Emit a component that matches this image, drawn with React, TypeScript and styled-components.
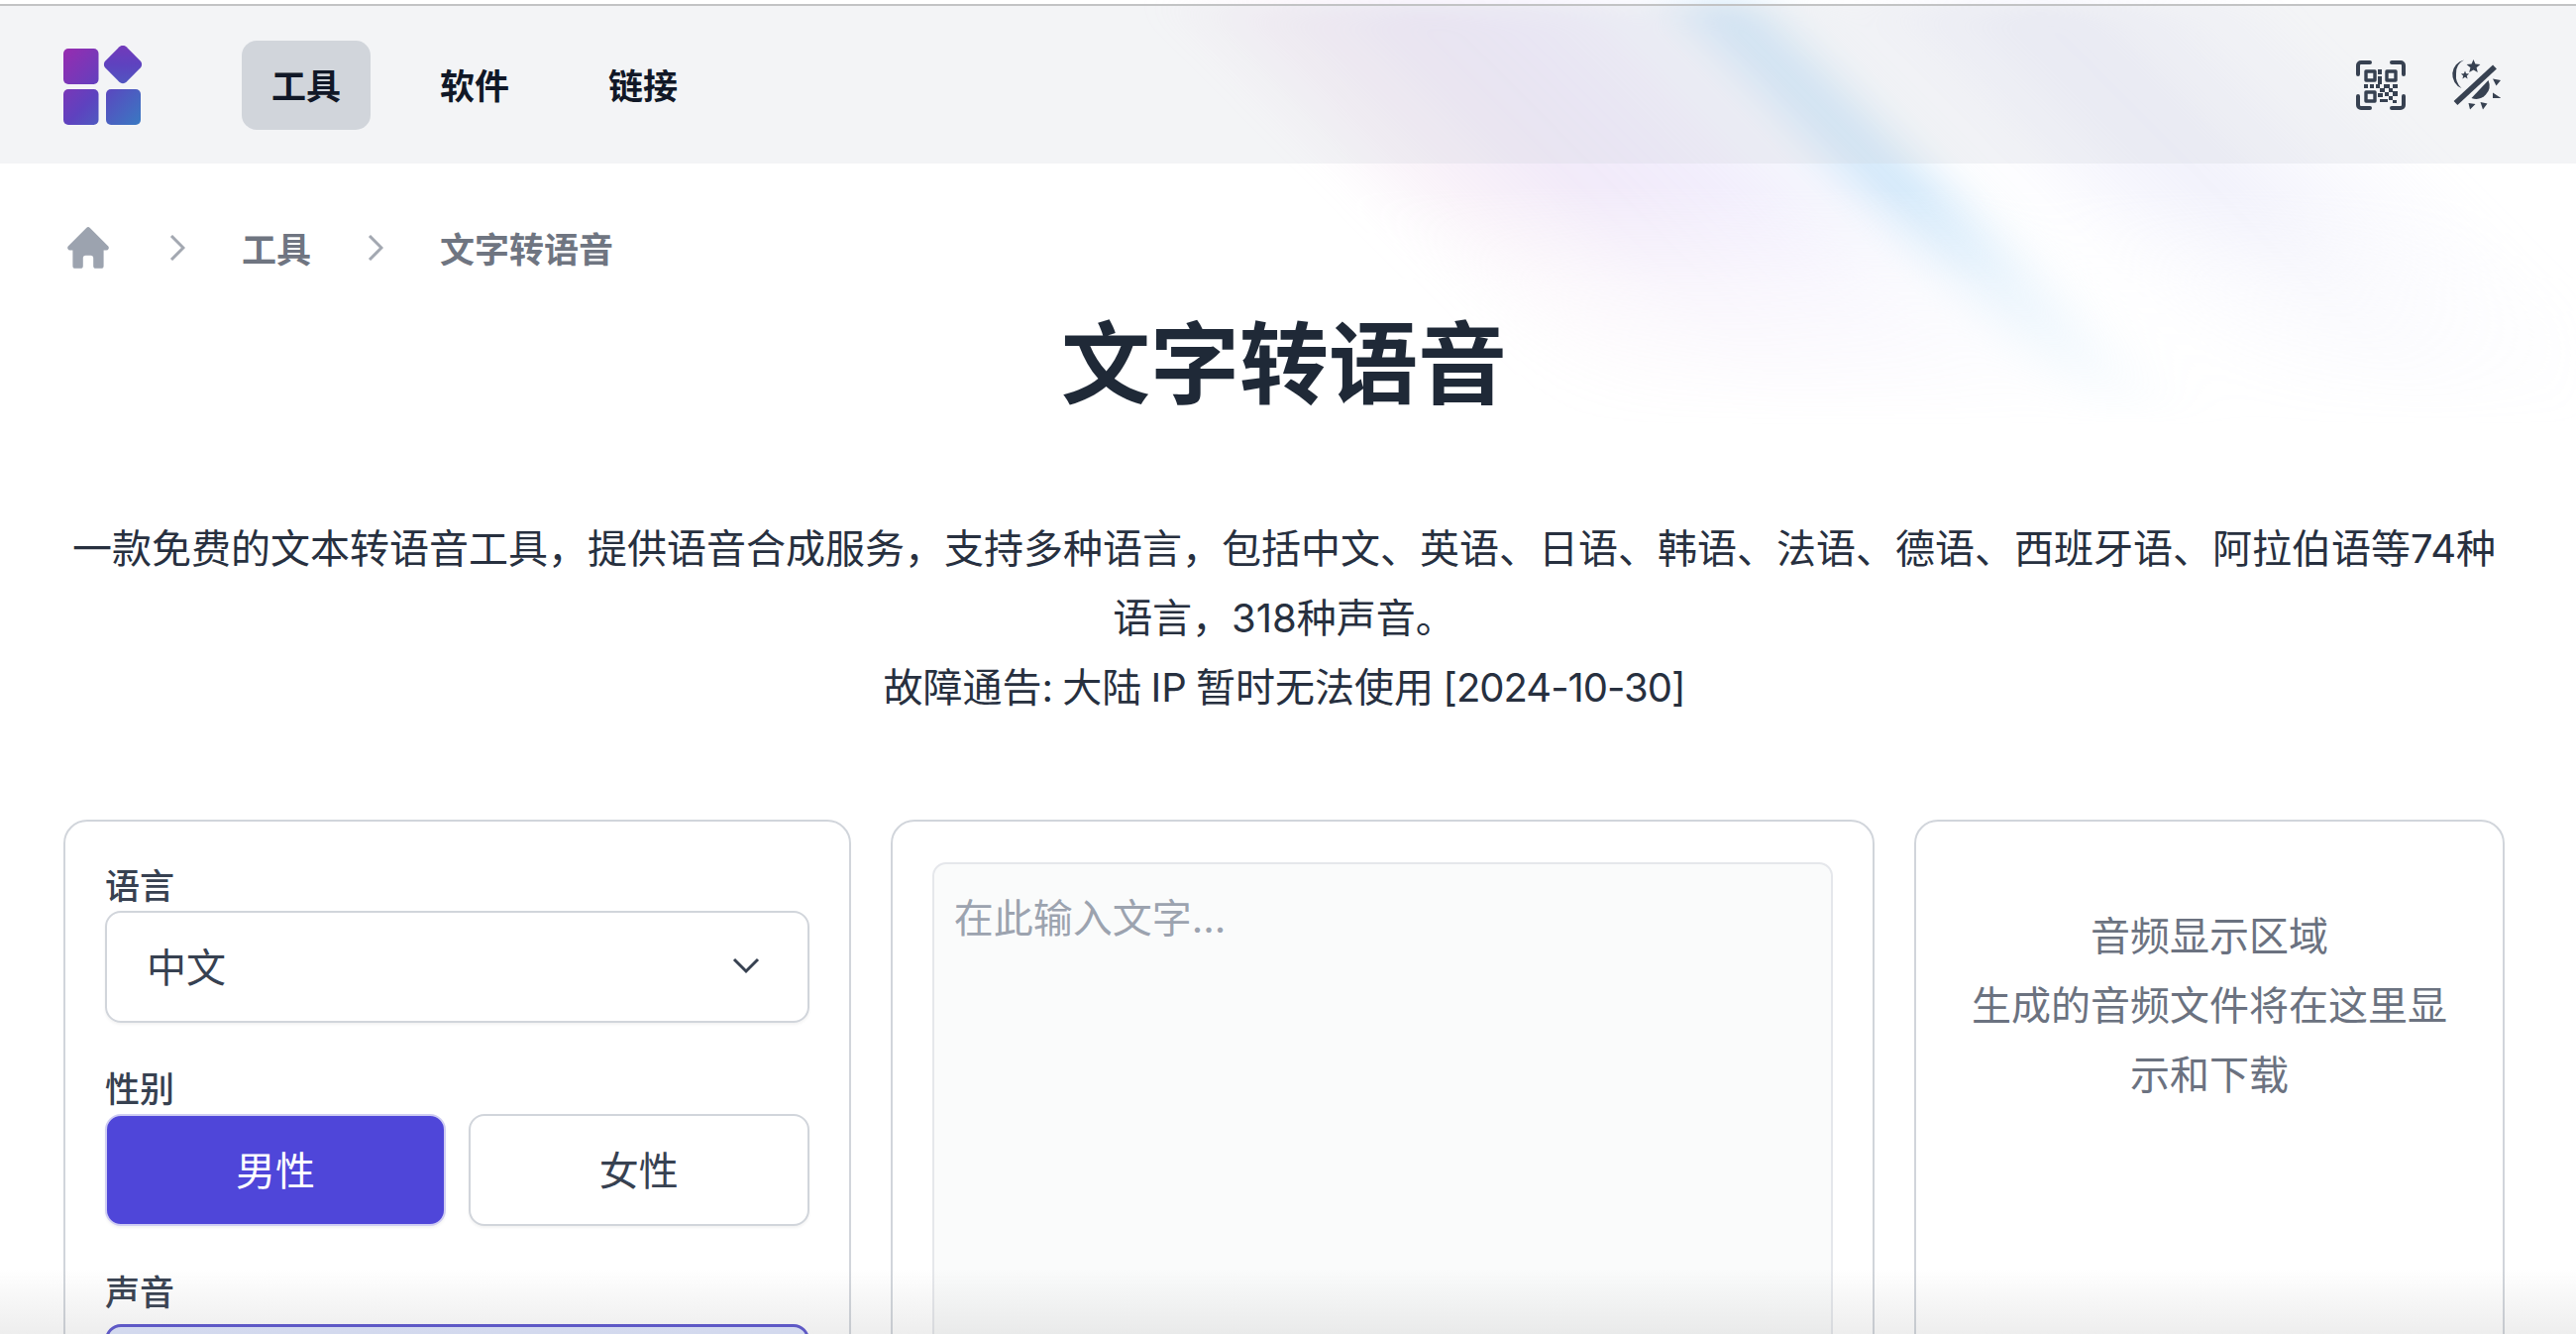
import React from 'react';
import styled, { createGlobalStyle } from 'styled-components';

const Global = createGlobalStyle`
  html, body { margin: 0; padding: 0; background: #fff; }
  * { box-sizing: border-box; }
  body { font-family: Inter, "Noto Sans CJK SC", "Noto Sans", sans-serif; color: #1f2937; }
`;

const Page = styled.div`
  position: relative;
  height: 100vh;
  overflow: hidden;
  background: #fff;
`;

const GlowClip = styled.div`
  position: absolute;
  top: 0;
  left: 1100px;
  width: 1500px;
  height: 500px;
  pointer-events: none;
  overflow: hidden;
  mask-image: linear-gradient(to bottom, #000 0, #000 190px, rgba(0,0,0,.45) 290px, transparent 430px);
`;

const Glow = styled.div`
  width: 100%;
  height: 480px;
  filter: blur(14px);
  background-image: linear-gradient(45deg,
    rgba(205,185,235,0) 27%,
    rgba(225,190,225,.2) 33%,
    rgba(210,185,235,.3) 40%,
    rgba(205,190,245,.26) 47%,
    rgba(200,205,245,.18) 52%,
    rgba(170,212,245,.56) 56%,
    rgba(220,235,250,.1) 59.8%,
    rgba(220,220,250,.05) 62.5%,
    rgba(205,205,245,.16) 67%,
    rgba(200,200,240,.24) 72%,
    rgba(205,205,245,.1) 79%,
    rgba(205,205,245,0) 85%);
`;

const BottomFade = styled.div`
  position: absolute;
  left: 0;
  right: 0;
  bottom: 0;
  height: 66px;
  pointer-events: none;
  background: linear-gradient(to bottom, rgba(120,120,120,0), rgba(120,120,120,.13));
`;

const TopRule = styled.div`
  position: relative;
  height: 2px;
  margin-top: 4px;
  background: #c2c3c4;
`;

const Header = styled.header`
  position: relative;
  display: flex;
  align-items: center;
  height: 159px;
  padding: 0 76px 0 64px;
  background: rgba(206,210,218,.24);
`;

const Nav = styled.nav`
  display: flex;
  gap: 40px;
  margin-left: 100px;
`;

const NavItem = styled.a<{ $active?: boolean }>`
  display: flex;
  align-items: center;
  justify-content: center;
  width: 130px;
  height: 90px;
  padding-bottom: 3px;
  border-radius: 15px;
  font-size: 35px;
  font-weight: 600;
  color: #111827;
  background: ${p => (p.$active ? '#d1d5db' : 'transparent')};
`;

const HeaderTools = styled.div`
  display: flex;
  align-items: center;
  gap: 45px;
  margin-left: auto;
`;

const Main = styled.main`
  position: relative;
  padding: 65px 72px 0 64px;
`;

const Crumbs = styled.div`
  display: flex;
  align-items: center;
  gap: 57px;
  height: 40px;
  font-size: 35px;
  font-weight: 600;
  color: #6f7581;
`;

const CrumbText = styled.span`
  margin-bottom: 2px;
`;

const HomeIcon = styled.svg`
  width: 52px;
  height: 52px;
  margin: 0 -1px 0 -1px;
  fill: #9ca3af;
  flex: none;
`;

const CrumbChevron = styled.svg`
  width: 16px;
  height: 26px;
  fill: none;
  stroke: #a3a8b1;
  stroke-width: 3;
  flex: none;
`;

const Title = styled.h1`
  margin: 38px 0 0;
  height: 120px;
  font-size: 90px;
  line-height: 120px;
  font-weight: 700;
  text-align: center;
  color: #1f2937;
`;

const Description = styled.p`
  margin: 91px 0 0;
  font-size: 40px;
  line-height: 70px;
  text-align: center;
  color: #27303f;
`;

const Notice = styled.span`
  word-spacing: -2px;
`;

const NoticeDate = styled.span`
  letter-spacing: -1px;
`;

const Grid = styled.section`
  display: grid;
  grid-template-columns: 4fr 5fr 3fr;
  gap: 40px;
  margin-top: 98px;
  height: 900px;
`;

const Panel = styled.div`
  border: 2px solid #d1d5db;
  border-radius: 24px;
  padding: 42px 40px;
  background: #fff;
  overflow: hidden;
`;

const Label = styled.div`
  height: 48px;
  font-size: 35px;
  line-height: 46px;
  font-weight: 500;
  color: #374151;
`;

const Field = styled.div`
  margin-bottom: 44px;
`;

const Select = styled.div`
  display: flex;
  align-items: center;
  justify-content: space-between;
  height: 113px;
  padding: 0 48px 3px 40px;
  border: 2px solid #d1d5db;
  border-radius: 16px;
  font-size: 40px;
  color: #374151;
  box-shadow: 0 2px 3px rgba(0,0,0,.05);
`;

const SelectChevron = styled.svg`
  width: 28px;
  height: 17px;
  fill: none;
  stroke: #374151;
  stroke-width: 3;
  flex: none;
`;

const ToggleRow = styled.div`
  display: grid;
  grid-template-columns: 344px 1fr;
  gap: 23px;
`;

const Toggle = styled.button<{ $on?: boolean }>`
  height: 113px;
  padding: 0 0 4px;
  border: 2px solid ${p => (p.$on ? '#cfcdf3' : '#d1d5db')};
  border-radius: 16px;
  font: inherit;
  font-size: 40px;
  color: ${p => (p.$on ? '#fff' : '#374151')};
  background: ${p => (p.$on ? '#4f46d9' : '#fff')};
  box-shadow: 0 2px 3px rgba(0,0,0,.05);
`;

const VoiceOption = styled.div`
  height: 113px;
  margin-top: 7px;
  border: 3px solid #5b55d0;
  border-radius: 16px;
  background: #e0e7ff;
`;

const TextArea = styled.textarea`
  display: block;
  width: 100%;
  height: 800px;
  margin-top: -1px;
  padding: 20px 20px;
  border: 2px solid #e5e7eb;
  border-radius: 14px;
  background: #fafbfb;
  font: inherit;
  font-size: 40px;
  line-height: 70px;
  color: #374151;
  resize: none;
  outline: none;
  &::placeholder { color: #9ca3af; opacity: 1; }
`;

const ResultPanel = styled(Panel)`
  padding-top: 81px;
  font-size: 40px;
  line-height: 70px;
  text-align: center;
  color: #6b7280;
`;

const Logo = () => (
  <svg width="80" height="80" viewBox="0 0 80 80" style={{ flex: 'none' }}>
    <defs>
      <linearGradient id="lg" gradientUnits="userSpaceOnUse" x1="0" y1="5" x2="78" y2="78">
        <stop offset="0" stopColor="#962cb0" />
        <stop offset="0.5" stopColor="#5e42bf" />
        <stop offset="1" stopColor="#3a78c2" />
      </linearGradient>
    </defs>
    <g fill="url(#lg)">
      <rect x="0" y="3" width="35.5" height="36" rx="5" />
      <rect x="0" y="44" width="35.5" height="36" rx="5" />
      <rect x="43" y="44" width="35" height="36" rx="5" />
      <rect x="45" y="4" width="30" height="30" rx="5" transform="rotate(45 60 19)" />
    </g>
  </svg>
);

const QrIcon = () => (
  <svg width="50" height="50" viewBox="0 0 50 50" fill="#374151" style={{ flex: 'none' }}>
    <g fill="none" stroke="#374151" strokeWidth="4" strokeLinecap="round" strokeLinejoin="round">
      <path d="M2 14V5a3 3 0 0 1 3-3h9" />
      <path d="M36 2h9a3 3 0 0 1 3 3v9" />
      <path d="M2 36v9a3 3 0 0 0 3 3h9" />
      <path d="M48 36v9a3 3 0 0 1-3 3h-9" />
      <path d="M10 11h9v9h-9zM31 11h9v9h-9zM10 32h9v9h-9z" strokeWidth="3.4" />
    </g>
    <path d="M22 9h4v5h-4zM22 16h4v8h-4zM8 24h4v4H8zM14 24h4v4h-4zM20 24h4v4h-4zM28 24h6v4h-6zM37 24h5v4h-5zM24 28h5v4h-5zM33 28h4v4h-4zM22 33h5v4h-5zM29 32h4v4h-4zM37 31h5v5h-5zM33 36h4v4h-4zM24 39h8v3h-8zM37 40h4v3h-4z" />
  </svg>
);

const ThemeIcon = () => (
  <svg width="51" height="51" viewBox="0 0 51 51" fill="#374151" style={{ flex: 'none' }}>
    <path d="M14 0.5A15 15 0 0 0 11.5 29 A17 17 0 0 1 6 14.5 A15 15 0 0 1 14 0.5z" />
    <path d="M23.5 0l1.9 4.6 5 .4-3.8 3.2 1.2 4.9-4.3-2.7-4.3 2.7 1.2-4.9-3.8-3.2 5-.4z" />
    <path d="M15 11.5l1.1 2.8 3 .2-2.3 1.9.8 3-2.6-1.6-2.6 1.6.8-3-2.3-1.9 3-.2z" />
    <path d="M45 7.5L5.5 44" stroke="#374151" strokeWidth="5.6" fill="none" />
    <path d="M38.5 21A13.5 13.5 0 0 1 21.5 39z" />
    <path d="M43 19.5l8 1.5-4.5 5.5zM43 33.5l8.5 5.5H43zM30.5 43l7 1.5-4.5 6zM18.5 44l7 1-5.5 5.5z" />
  </svg>
);

export default function App() {
  return (
    <Page>
      <Global />
      <GlowClip><Glow /></GlowClip>
      <TopRule />
      <Header>
        <Logo />
        <Nav>
          <NavItem $active>工具</NavItem>
          <NavItem>软件</NavItem>
          <NavItem>链接</NavItem>
        </Nav>
        <HeaderTools>
          <QrIcon />
          <ThemeIcon />
        </HeaderTools>
      </Header>
      <Main>
        <Crumbs>
          <HomeIcon viewBox="0 0 20 20">
            <path d="M9.293 2.293a1 1 0 011.414 0l7 7A1 1 0 0117 11h-1v6a1 1 0 01-1 1h-2a1 1 0 01-1-1v-3a1 1 0 00-1-1H9a1 1 0 00-1 1v3a1 1 0 01-1 1H5a1 1 0 01-1-1v-6H3a1 1 0 01-.707-1.707l7-7z" />
          </HomeIcon>
          <CrumbChevron viewBox="0 0 16 26"><path d="M2 1l12 12L2 25" /></CrumbChevron>
          <CrumbText>工具</CrumbText>
          <CrumbChevron viewBox="0 0 16 26"><path d="M2 1l12 12L2 25" /></CrumbChevron>
          <CrumbText>文字转语音</CrumbText>
        </Crumbs>
        <Title>文字转语音</Title>
        <Description>
          一款免费的文本转语音工具，提供语音合成服务，支持多种语言，包括中文、英语、日语、韩语、法语、德语、西班牙语、阿拉伯语等74种语言，318种声音。
          <br />
          <Notice>故障通告: 大陆 IP 暂时无法使用 <NoticeDate>[2024-10-30]</NoticeDate></Notice>
        </Description>
        <Grid>
          <Panel>
            <Field>
              <Label>语言</Label>
              <Select>
                中文
                <SelectChevron viewBox="0 0 28 17"><path d="M2 2l12 12L26 2" /></SelectChevron>
              </Select>
            </Field>
            <Field>
              <Label>性别</Label>
              <ToggleRow>
                <Toggle $on>男性</Toggle>
                <Toggle>女性</Toggle>
              </ToggleRow>
            </Field>
            <Label>声音</Label>
            <VoiceOption />
          </Panel>
          <Panel>
            <TextArea placeholder="在此输入文字..." />
          </Panel>
          <ResultPanel>
            音频显示区域
            <br />
            生成的音频文件将在这里显示和下载
          </ResultPanel>
        </Grid>
      </Main>
      <BottomFade />
    </Page>
  );
}
